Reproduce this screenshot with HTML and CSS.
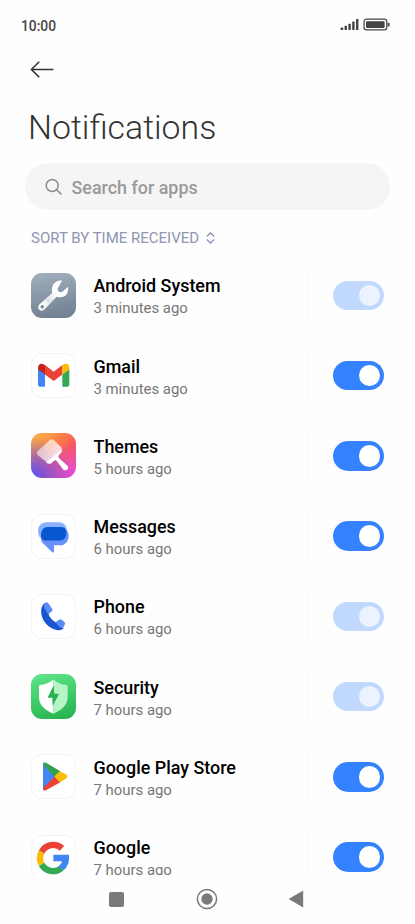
FILE: index.html
```html
<!DOCTYPE html>
<html lang="en">
<head>
    <meta charset="UTF-8">
    <meta name="viewport" content="width=device-width, initial-scale=1.0">
    <title>Notifications</title>
    <link rel="stylesheet" href="styles.css">
</head>
<body>
    <div class="screen">
        <div class="status-bar">
            <span class="time">10:00</span>
            <svg class="status-icons" width="50" height="14" viewBox="0 0 50 14">
                <g fill="#444">
                    <rect x="0.6" y="9.6" width="2.6" height="2.4" rx="0.6"/>
                    <rect x="4.6" y="7.8" width="2.4" height="4.2" rx="0.5"/>
                    <rect x="8.4" y="5.8" width="2.4" height="6.2" rx="0.5"/>
                    <rect x="12.2" y="3.4" width="2.4" height="8.6" rx="0.5"/>
                    <rect x="16" y="1" width="2.4" height="11" rx="0.5"/>
                    <rect x="26" y="3.2" width="18.6" height="6.8" rx="1"/>
                    <path d="M47.6 4.8h1a1 1 0 0 1 1 1v1.6a1 1 0 0 1-1 1h-1z"/>
                </g>
                <rect x="24" y="1.2" width="22.8" height="10.6" rx="2.6" fill="none" stroke="#444" stroke-width="1.2"/>
            </svg>
        </div>

        <div class="header">
            <svg class="back" width="24" height="18" viewBox="0 0 24 18" fill="none" stroke="#333" stroke-width="1.5">
                <path d="M23.5 9.5H1.2M9.2 1.7L1.4 9.5l7.8 7.6"/>
            </svg>
            <h1>Notifications</h1>
        </div>

        <div class="search">
            <svg width="18" height="18" viewBox="0 0 18 18" fill="none" stroke="#8c8c8c" stroke-width="1.5">
                <circle cx="7.2" cy="7.4" r="6"/>
                <path d="M11.6 11.8l4.8 4.6"/>
            </svg>
            <span>Search for apps</span>
        </div>

        <div class="sort">
            <span>SORT BY TIME RECEIVED</span>
            <svg width="9" height="12" viewBox="0 0 9 12" fill="none" stroke="#8f95b2" stroke-width="1.4">
                <path d="M0.8 4.4l3.7-3.5 3.7 3.5M0.8 7.6l3.7 3.5 3.7-3.5"/>
            </svg>
        </div>

        <div class="list">
            <div class="row">
                <div class="icon system">
                    <svg viewBox="33 33 135 135">
                        <defs>
                            <linearGradient id="wrench" x1="1" y1="0" x2="0" y2="1">
                                <stop offset="0.4" stop-color="#fff"/>
                                <stop offset="0.65" stop-color="#dde3e9"/>
                                <stop offset="0.85" stop-color="#fff"/>
                            </linearGradient>
                        </defs>
                        <path fill="url(#wrench)" fill-rule="evenodd" d="M126 56C112 53 98 64 96 78c-1 6 0 10 1 14l-38 35c-6 5-5 12-1 16s11 4 16-1l36-38c5 2 10 2 15 1 14-2 22-15 19-31l-15 14c-5 4-11 3-14-1s-3-9 1-13zM67 129a5.5 5.5 0 1 1-.1 11 5.5 5.5 0 0 1 .1-11z"/>
                    </svg>
                </div>
                <div class="info">
                    <div class="name">Android System</div>
                    <div class="ago">3 minutes ago</div>
                </div>
                <div class="toggle disabled"></div>
            </div>

            <div class="row">
                <div class="icon plain">
                    <svg viewBox="33 33.75 135 135">
                        <path fill="#4285f4" d="M54 82l21 15v38H60q-6 0-6-6z"/>
                        <path fill="#34a853" d="M148 82l-21 15v38h15q6 0 6-6z"/>
                        <path fill="#ea4335" d="M75 70l26 20 26-20v28l-26 20-26-20z"/>
                        <path fill="#c5221f" d="M54 78c0-11 11-15 19-9l2 2v27L54 83z"/>
                        <path fill="#fbbc04" d="M148 78c0-11-11-15-19-9l-2 2v27l21-15z"/>
                    </svg>
                </div>
                <div class="info">
                    <div class="name">Gmail</div>
                    <div class="ago">3 minutes ago</div>
                </div>
                <div class="toggle"></div>
            </div>

            <div class="row">
                <div class="icon themes">
                    <svg viewBox="33 34.5 135 135">
                        <defs>
                            <linearGradient id="brush" x1="0" y1="0.3" x2="1" y2="0.7">
                                <stop offset="0" stop-color="#fff" stop-opacity="0.5"/>
                                <stop offset="1" stop-color="#fff" stop-opacity="0.85"/>
                            </linearGradient>
                        </defs>
                        <path fill="url(#brush)" d="M52 90l38-35q5-4 10 0l22 21q6 6 0 12l-32 34q-5 5-10 0L52 100q-4-5 0-10z"/>
                        <path fill="#fff" d="M125 83q3 6-2 11l-7 8q-3 4 2 9l23 20c5 5 4 10 1 13s-9 4-13-1l-17-22q-5-7-10-3l-8 7q-8 5-15-2z"/>
                    </svg>
                </div>
                <div class="info">
                    <div class="name">Themes</div>
                    <div class="ago">5 hours ago</div>
                </div>
                <div class="toggle"></div>
            </div>

            <div class="row">
                <div class="icon plain">
                    <svg viewBox="33 35.25 135 135">
                        <path fill="#8ab1ff" d="M79 60h36c14 0 23 8 25 20v34H78C63 114 54 101 54 86s10-26 25-26z"/>
                        <path fill="#6691fa" d="M86 74h37c14 0 23 13 23 27s-10 28-24 28h-20v18c0 4-3 5-5 3L68 122c-6-6-5-13-5-21 0-16 8-27 23-27z"/>
                        <path fill="#0957d0" d="M84 74h39c12 0 16 9 16 18 0 13-8 23-21 23H78c-9 0-15-7-15-16 0-15 8-25 21-25z"/>
                    </svg>
                </div>
                <div class="info">
                    <div class="name">Messages</div>
                    <div class="ago">6 hours ago</div>
                </div>
                <div class="toggle"></div>
            </div>

            <div class="row">
                <div class="icon plain">
                    <svg viewBox="33 36 135 135">
                        <path fill="#1a56cf" d="M74 63C65 70 62 82 64 96c4 25 24 44 46 48 9 2 16 0 21-6l-24-17C96 115 88 107 85 94z"/>
                        <path fill="#5a8cf8" d="M74 64q6-6 11 0l12 17q2 4-1 7l-11 9-11-17q-4-9 0-16zM107 121l10-8q4-3 8 0l8 7q4 4 1 9-3 7-9 10-8-3-18-18z"/>
                    </svg>
                </div>
                <div class="info">
                    <div class="name">Phone</div>
                    <div class="ago">6 hours ago</div>
                </div>
                <div class="toggle disabled"></div>
            </div>

            <div class="row">
                <div class="icon security">
                    <svg viewBox="33 36.75 135 135">
                        <path fill="#fff" d="M100 53q-18 15-38 16-5 1-5 6v31c0 27 22 41 43 50z"/>
                        <path fill="#b5f5c3" d="M100 53q18 15 38 16 5 1 5 6v31c0 27-22 41-43 50z"/>
                        <path fill="#28b450" d="M101 71l-17 34q-1 3 2 3h11l1 25 18-34q1-3-2-3h-11z"/>
                    </svg>
                </div>
                <div class="info">
                    <div class="name">Security</div>
                    <div class="ago">7 hours ago</div>
                </div>
                <div class="toggle disabled"></div>
            </div>

            <div class="row">
                <div class="icon plain">
                    <svg viewBox="33 37.5 135 135">
                        <path fill="#4285f4" d="M69 69v72q0 5 3 6l34-42-34-42q-3 1-3 6z"/>
                        <path fill="#34a04a" d="M70 65q3-4 8-1l43 25-17 17-33-35z"/>
                        <path fill="#ea4335" d="M70 145q3 4 8 1l43-24-17-17-34 34z"/>
                        <path fill="#fbbc04" d="M120 89l18 10q7 6 0 12l-18 11-17-17z"/>
                    </svg>
                </div>
                <div class="info">
                    <div class="name">Google Play Store</div>
                    <div class="ago">7 hours ago</div>
                </div>
                <div class="toggle"></div>
            </div>

            <div class="row">
                <div class="icon plain">
                    <svg viewBox="93 43.5 135 135" fill="none" stroke-width="19">
                        <path stroke="#ea4335" d="M124.7 94.5A39.5 39.5 0 0 1 186 83.5"/>
                        <path stroke="#fbbc05" d="M124.7 131.5a39.5 39.5 0 0 1 0-37"/>
                        <path stroke="#34a853" d="M184 143a39.5 39.5 0 0 1-59.3-11.5"/>
                        <path fill="#4285f4" d="M160 103h47c2 19-3 35-16 47l-16-13c6-4 10-9 11-15h-26z"/>
                    </svg>
                </div>
                <div class="info">
                    <div class="name">Google</div>
                    <div class="ago">7 hours ago</div>
                </div>
                <div class="toggle"></div>
            </div>
        </div>

        <div class="nav-bar">
            <svg width="15" height="15" viewBox="0 0 15 15"><rect width="15" height="15" rx="2" fill="#7a7a7a"/></svg>
            <svg width="22" height="22" viewBox="0 0 22 22">
                <circle cx="11" cy="11" r="9.6" fill="none" stroke="#7a7a7a" stroke-width="1.5"/>
                <circle cx="11" cy="11" r="5.7" fill="#7a7a7a"/>
            </svg>
            <svg width="15" height="18" viewBox="0 0 15 18"><path d="M14.2.5v17L.5 9.500q-.6-.5 0-1z" fill="#7a7a7a"/></svg>
        </div>
    </div>
</body>
</html>
```
FILE: styles.css
```css
* {
    box-sizing: border-box;
}

body {
    margin: 0;
    font-family: Roboto, sans-serif;
    background-color: #fefefe;
}

.screen {
    display: flex;
    flex-direction: column;
    height: 924px;
    overflow: hidden;
}

.status-bar {
    display: flex;
    justify-content: space-between;
    align-items: center;
    height: 52px;
    padding: 0 25px 0 21px;
}

.time {
    font-size: 13.8px;
    font-weight: 500;
    color: #444;
}

.status-icons {
    margin-bottom: 2px;
}

.header {
    height: 111px;
    padding: 8px 28px 0;
}

.back {
    display: block;
    margin-left: 2px;
}

h1 {
    margin: 28px 0 0;
    font-size: 33.8px;
    font-weight: 300;
    line-height: 44px;
    color: #333;
}

.search {
    display: flex;
    align-items: center;
    flex-shrink: 0;
    gap: 9px;
    height: 47px;
    margin: 0 25px;
    padding-left: 19.5px;
    border-radius: 24px;
    background-color: #f5f5f5;
    font-size: 17.9px;
    font-weight: 500;
    color: #999;
}

.search span {
    padding-top: 1px;
}

.sort {
    display: flex;
    align-items: center;
    gap: 7px;
    height: 45px;
    padding: 10px 31px 0;
    font-size: 15px;
    line-height: 18px;
    color: #8f95b2;
}

.list {
    height: 620px;
    flex-shrink: 0;
    padding-top: 0.3px;
    overflow: hidden;
}

.row {
    display: flex;
    align-items: center;
    height: 80.25px;
    padding: 0 31px;
}

.icon {
    width: 45px;
    height: 45px;
    border-radius: 11px;
    overflow: hidden;
}

.icon svg {
    display: block;
    width: 45px;
    height: 45px;
}

.plain {
    background-color: #fff;
    box-shadow: inset 0 0 0 1px #f4f4f4;
}

.system {
    background: linear-gradient(170deg, #a2b0bf, #6d7d8e);
}

.themes {
    background: radial-gradient(circle at 0% 100%, #5d50f5 5%, rgba(110, 80, 240, 0) 65%),
        radial-gradient(circle at 100% 100%, #e24be0 5%, rgba(226, 75, 200, 0) 60%),
        linear-gradient(135deg, #fba545 15%, #fa5a50 60%);
}

.security {
    background: linear-gradient(165deg, #5fe68a, #22b14c);
}

.info {
    flex: 1;
    height: 42px;
    margin-left: 17.5px;
    border-right: 1px solid #f4f4f4;
}

.name {
    font-size: 17.9px;
    font-weight: 500;
    line-height: 24px;
    color: #000;
}

.ago {
    font-size: 14.9px;
    line-height: 21px;
    color: #777;
}

.toggle {
    display: flex;
    justify-content: flex-end;
    width: 51.5px;
    height: 29.5px;
    margin: 0 0 0 24px;
    padding: 4px;
    border-radius: 15px;
    background-color: #3482ff;
}

.toggle::after {
    content: "";
    width: 21.5px;
    height: 21.5px;
    border-radius: 50%;
    background-color: #fff;
}

.toggle.disabled {
    background-color: #c2d9ff;
}

.toggle.disabled::after {
    background-color: #ebf3ff;
}

.nav-bar {
    display: flex;
    justify-content: space-between;
    align-items: center;
    height: 48px;
    padding: 0 111px 0 109px;
}
```
